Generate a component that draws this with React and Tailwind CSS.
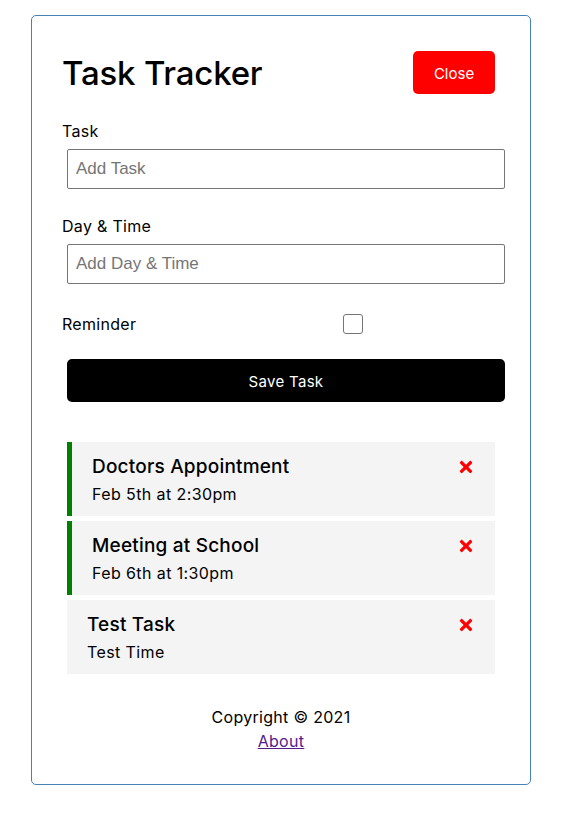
import React from 'react';
import { FaTimes } from 'react-icons/fa';

const tasks = [
    { id: 1, text: 'Doctors Appointment', day: 'Feb 5th at 2:30pm', reminder: true },
    { id: 2, text: 'Meeting at School', day: 'Feb 6th at 1:30pm', reminder: true },
    { id: 3, text: 'Test Task', day: 'Test Time', reminder: false },
];

const Task = ({ task }) => (
    <div
        className={`ml-[5px] bg-[#f4f4f4] px-5 pt-[10px] h-[74px] ${task.reminder ? 'border-l-[5px] border-[#008000]' : ''}`}
    >
        <h3 className="flex items-center justify-between text-[19px] font-medium leading-[30px] tracking-[0.2px] text-black">
            {task.text}
            <FaTimes className="text-[#ff0000] text-[18px]" />
        </h3>
        <p className="text-[16px] leading-[24px] tracking-[0.4px] text-black">{task.day}</p>
    </div>
);

const App = () => {
    return (
        <div className="bg-white min-h-[839px] pt-[15px]" style={{ fontFamily: 'Inter, "Open Sans", sans-serif' }}>
            <div className="ml-[31px] w-[500px] border border-[#4682b4] rounded-[5px] p-[30px] pb-[31px]">
                {/* Header */}
                <header className="flex items-center justify-between mb-5">
                    <h1 className="text-[33px] font-medium text-black tracking-[-0.2px] pt-[2px]">Task Tracker</h1>
                    <button className="m-[5px] w-[82px] h-[43px] pt-[3px] rounded-[5px] bg-[#ff0000] text-white text-[15px]">
                        Close
                    </button>
                </header>

                {/* Add form */}
                <form className="mb-[40px]">
                    <div>
                        <label className="block text-[16px] leading-[25px] tracking-[0.3px] text-black">Task</label>
                        <input
                            type="text"
                            placeholder="Add Task"
                            className="m-[5px] mr-0 block w-[438px] h-[40px] px-[8px] border border-[#767676] rounded-[2px] text-[17px] placeholder:text-[#757575]"
                            style={{ fontFamily: '"Liberation Sans", Arial, sans-serif' }}
                        />
                    </div>
                    <div className="mt-[25px]">
                        <label className="block text-[16px] leading-[25px] tracking-[0.3px] text-black">Day &amp; Time</label>
                        <input
                            type="text"
                            placeholder="Add Day & Time"
                            className="m-[5px] mr-0 block w-[438px] h-[40px] px-[8px] border border-[#767676] rounded-[2px] text-[17px] placeholder:text-[#757575]"
                            style={{ fontFamily: '"Liberation Sans", Arial, sans-serif' }}
                        />
                    </div>
                    <div className="mt-[25px] flex items-center h-[30px]">
                        <label className="w-[281px] text-[16px] tracking-[0.3px] text-black">Reminder</label>
                        <span className="w-[20px] h-[20px] rounded-[3px] border border-[#767676] bg-white" />
                    </div>
                    <button
                        type="button"
                        className="mt-5 ml-[5px] block w-[438px] h-[43px] pt-[3px] rounded-[5px] bg-black text-white text-[15px] tracking-[0.3px]"
                    >
                        Save Task
                    </button>
                </form>

                {/* Tasks */}
                <div className="flex flex-col gap-[5px] pr-[5px]">
                    {tasks.map((t) => (
                        <Task key={t.id} task={t} />
                    ))}
                </div>

                {/* Footer */}
                <footer className="mt-[31px] text-center text-[16px] leading-[24px] tracking-[0.3px] text-black">
                    <p>Copyright &copy; 2021</p>
                    <a href="#" className="underline text-[#551a8b]">About</a>
                </footer>
            </div>
        </div>
    );
};

export default App;
